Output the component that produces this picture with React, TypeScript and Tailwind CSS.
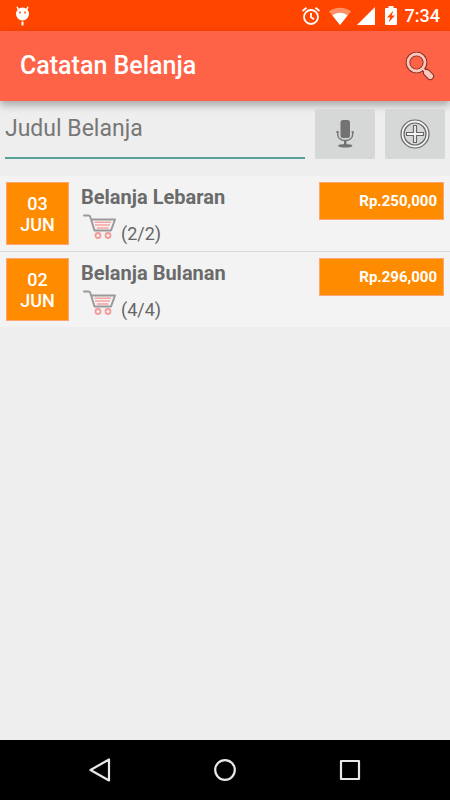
import React from "react";

interface ShoppingList {
  id: number;
  day: string;
  month: string;
  title: string;
  done: number;
  total: number;
  price: string;
}

const lists: ShoppingList[] = [
  { id: 1, day: "03", month: "JUN", title: "Belanja Lebaran", done: 2, total: 2, price: "Rp.250,000" },
  { id: 2, day: "02", month: "JUN", title: "Belanja Bulanan", done: 4, total: 4, price: "Rp.296,000" },
];

const DebugIcon = () => (
  <svg width="16" height="20" viewBox="0 0 16 20" fill="#fff">
    <circle cx="8.5" cy="8" r="6.5" />
    <path d="M4.5 4 3 .8M12.500 4 14 .8" stroke="#fff" strokeWidth="1.5" />
    <circle cx="6" cy="6.500" r="0.900" fill="#ff4500" />
    <circle cx="11" cy="6.500" r="0.900" fill="#ff4500" />
    <rect x="7.500" y="15.500" width="2" height="4" />
  </svg>
);

const AlarmIcon = () => (
  <svg width="20" height="20" viewBox="0 0 20 20" fill="none" stroke="#fff" strokeWidth="1.8">
    <circle cx="10" cy="11" r="7" />
    <path d="M10 7v4.3l3 2M1.500 5l4-3.300M18.500 5l-4-3.300" />
  </svg>
);

const WifiIcon = () => (
  <svg width="22" height="18" viewBox="0 0 22 18" fill="#fff">
    <path d="M11 18 0 4.500C6-.5 16-.5 22 4.500Z" opacity="0.4" />
    <path d="M11 18 3.500 8.500c4-3.600 11-3.600 15 0Z" />
  </svg>
);

const SignalIcon = () => (
  <svg width="18" height="18" viewBox="0 0 18 18" fill="#fff">
    <path d="M18 0v18H0Z" />
  </svg>
);

const BatteryIcon = () => (
  <svg width="12" height="19" viewBox="0 0 12 19">
    <path d="M3.500 0h5v2H11a1 1 0 0 1 1 1v15a1 1 0 0 1-1 1H1a1 1 0 0 1-1-1V3a1 1 0 0 1 1-1h2.500Z" fill="#fff" />
    <path d="M8.500 4.500 2 11.500h3.300l-1.800 5L10 9.500H6.700Z" fill="#ff4500" />
  </svg>
);

const SearchIcon = () => (
  <svg width="30" height="30" viewBox="0 0 30 30" fill="none" strokeLinecap="round">
    <path d="m18.500 18.500 2 2" stroke="#7d2f22" strokeWidth="4" />
    <path d="m21.800 21.800 3.500 3.500" stroke="#7d2f22" strokeWidth="7.500" />
    <circle cx="11.500" cy="11.500" r="8.500" stroke="#7d2f22" strokeWidth="4.600" />
    <circle cx="11.500" cy="11.500" r="8.500" stroke="#ffc6bc" strokeWidth="2.800" />
    <path d="m18 18 3 3" stroke="#ffc6bc" strokeWidth="2" />
    <path d="m21.800 21.800 3.500 3.500" stroke="#ffc6bc" strokeWidth="5.500" />
  </svg>
);

const MicIcon = () => (
  <svg width="18" height="28" viewBox="0 0 18 28" fill="#737373">
    <rect x="4.500" y="0" width="9.500" height="18" rx="2.500" />
    <path d="M1.700 12v2c0 4 3 6.500 7.500 6.500s7.500-2.500 7.500-6.500v-2" fill="none" stroke="#737373" strokeWidth="1.400" />
    <path d="M0 11.800h3M15.500 11.800H18" stroke="#737373" strokeWidth="1.200" />
    <path d="M8 20h2.500v5H8Z" />
    <ellipse cx="9.200" cy="25.700" rx="7.200" ry="1.800" />
  </svg>
);

const AddIcon = () => (
  <svg width="30" height="30" viewBox="0 0 30 30" fill="none">
    <circle cx="15" cy="15" r="12.500" stroke="#f4f4f4" strokeWidth="3" />
    <circle cx="15" cy="15" r="14" stroke="#666" strokeWidth="1.200" />
    <circle cx="15" cy="15" r="11" stroke="#666" strokeWidth="1.200" />
    <path d="M13.500 6.500h3v7h7v3h-7v7h-3v-7h-7v-3h7Z" fill="#f4f4f4" stroke="#666" strokeWidth="1.200" strokeLinejoin="round" />
  </svg>
);

const CartIcon = () => (
  <svg width="34" height="26" viewBox="0 0 34 26" fill="none">
    <path d="M1 1.500h4.500q1.500 0 2 2L11.500 16.500H28L32 5.500H8" stroke="#9a9a9a" strokeWidth="2" strokeLinejoin="round" strokeLinecap="round" />
    <path d="M11.500 8.200h16.500M12 11h15M14 14h11.500" stroke="#f9a19f" strokeWidth="1.600" />
    <circle cx="15" cy="21.500" r="2.500" stroke="#f59a98" strokeWidth="1.800" />
    <circle cx="25" cy="21.500" r="2.500" stroke="#f59a98" strokeWidth="1.800" />
  </svg>
);

const StatusBar = () => (
  <div className="flex h-[31px] items-center justify-between bg-[#ff4500] pr-[10px] pl-[14px]">
    <DebugIcon />
    <div className="flex items-center">
      <AlarmIcon />
      <div className="ml-2"><WifiIcon /></div>
      <div className="ml-[6px]"><SignalIcon /></div>
      <div className="ml-[10px]"><BatteryIcon /></div>
      <span className="ml-2 text-[18px] leading-6 font-medium text-white">7:34</span>
    </div>
  </div>
);

const ListRow: React.FC<{ item: ShoppingList }> = ({ item }) => (
  <li className="flex items-start p-[6px]">
    <div className="flex size-[63px] shrink-0 flex-col justify-center border border-[#ffa573] bg-[#ff8c00] text-center text-[18px] leading-[21px] font-medium text-white">
      <span>{item.day}</span>
      <span>{item.month}</span>
    </div>
    <div className="ml-3 min-w-0 flex-1">
      <h2 className="text-[20px] leading-[30px] font-bold text-[#6b6b6b]">{item.title}</h2>
      <div className="flex items-start gap-1 pl-[2px]">
        <div className="pt-[2px]"><CartIcon /></div>
        <span className="pt-3 text-[18px] leading-5 text-[#666]">({item.done}/{item.total})</span>
      </div>
    </div>
    <div className="w-[125px] shrink-0 border border-[#ffa573] bg-[#ff8c00] pr-[6px] text-right text-[15px] leading-9 font-bold text-white">
      {item.price}
    </div>
  </li>
);

const NavBar = () => (
  <nav className="flex h-[60px] items-center justify-around bg-black px-[37px]">
    <button aria-label="Back">
      <svg width="24" height="26" viewBox="0 0 24 26" fill="none" stroke="#e8e8e8" strokeWidth="2.200" strokeLinejoin="round">
        <path d="M21 2.500v21L2.500 13Z" />
      </svg>
    </button>
    <button aria-label="Home">
      <svg width="24" height="24" viewBox="0 0 24 24" fill="none" stroke="#e8e8e8" strokeWidth="2.200">
        <circle cx="12" cy="12" r="9.800" />
      </svg>
    </button>
    <button aria-label="Recent apps">
      <svg width="24" height="24" viewBox="0 0 24 24" fill="none" stroke="#e8e8e8" strokeWidth="2.200" strokeLinejoin="round">
        <rect x="3" y="3" width="18" height="18" />
      </svg>
    </button>
  </nav>
);

const App: React.FC = () => {
  return (
    <div className="flex min-h-screen flex-col bg-[#eeeeee] font-['Roboto',sans-serif]">
      <StatusBar />
      <header className="flex h-[70px] items-center justify-between bg-[#ff6347] pr-[15px] pl-5 shadow-[0_4px_8px_rgba(0,0,0,0.3)]">
        <h1 className="text-[25px] leading-8 font-medium text-white">Catatan Belanja</h1>
        <button aria-label="Cari">
          <SearchIcon />
        </button>
      </header>

      <main className="flex-1">
        <form className="flex gap-[10px] px-[5px] pt-2 pb-[17px]">
          <input
            type="text"
            aria-label="Judul Belanja"
            placeholder="Judul Belanja"
            className="h-[50px] min-w-0 flex-1 border-b-2 border-[#58a198] pb-[10px] text-[23px] text-[#555] outline-none placeholder:text-[#777]"
          />
          <button type="button" aria-label="Rekam suara" className="flex h-[50px] w-[60px] items-center justify-center rounded-[2px] bg-[#d6d7d7]">
            <MicIcon />
          </button>
          <button type="button" aria-label="Tambah" className="flex h-[50px] w-[60px] items-center justify-center rounded-[2px] bg-[#d6d7d7]">
            <AddIcon />
          </button>
        </form>

        <ul className="divide-y divide-[#d9d9d9] bg-[#f3f3f3]">
          {lists.map((item) => (
            <ListRow key={item.id} item={item} />
          ))}
        </ul>
      </main>

      <NavBar />
    </div>
  );
};

export default App;
